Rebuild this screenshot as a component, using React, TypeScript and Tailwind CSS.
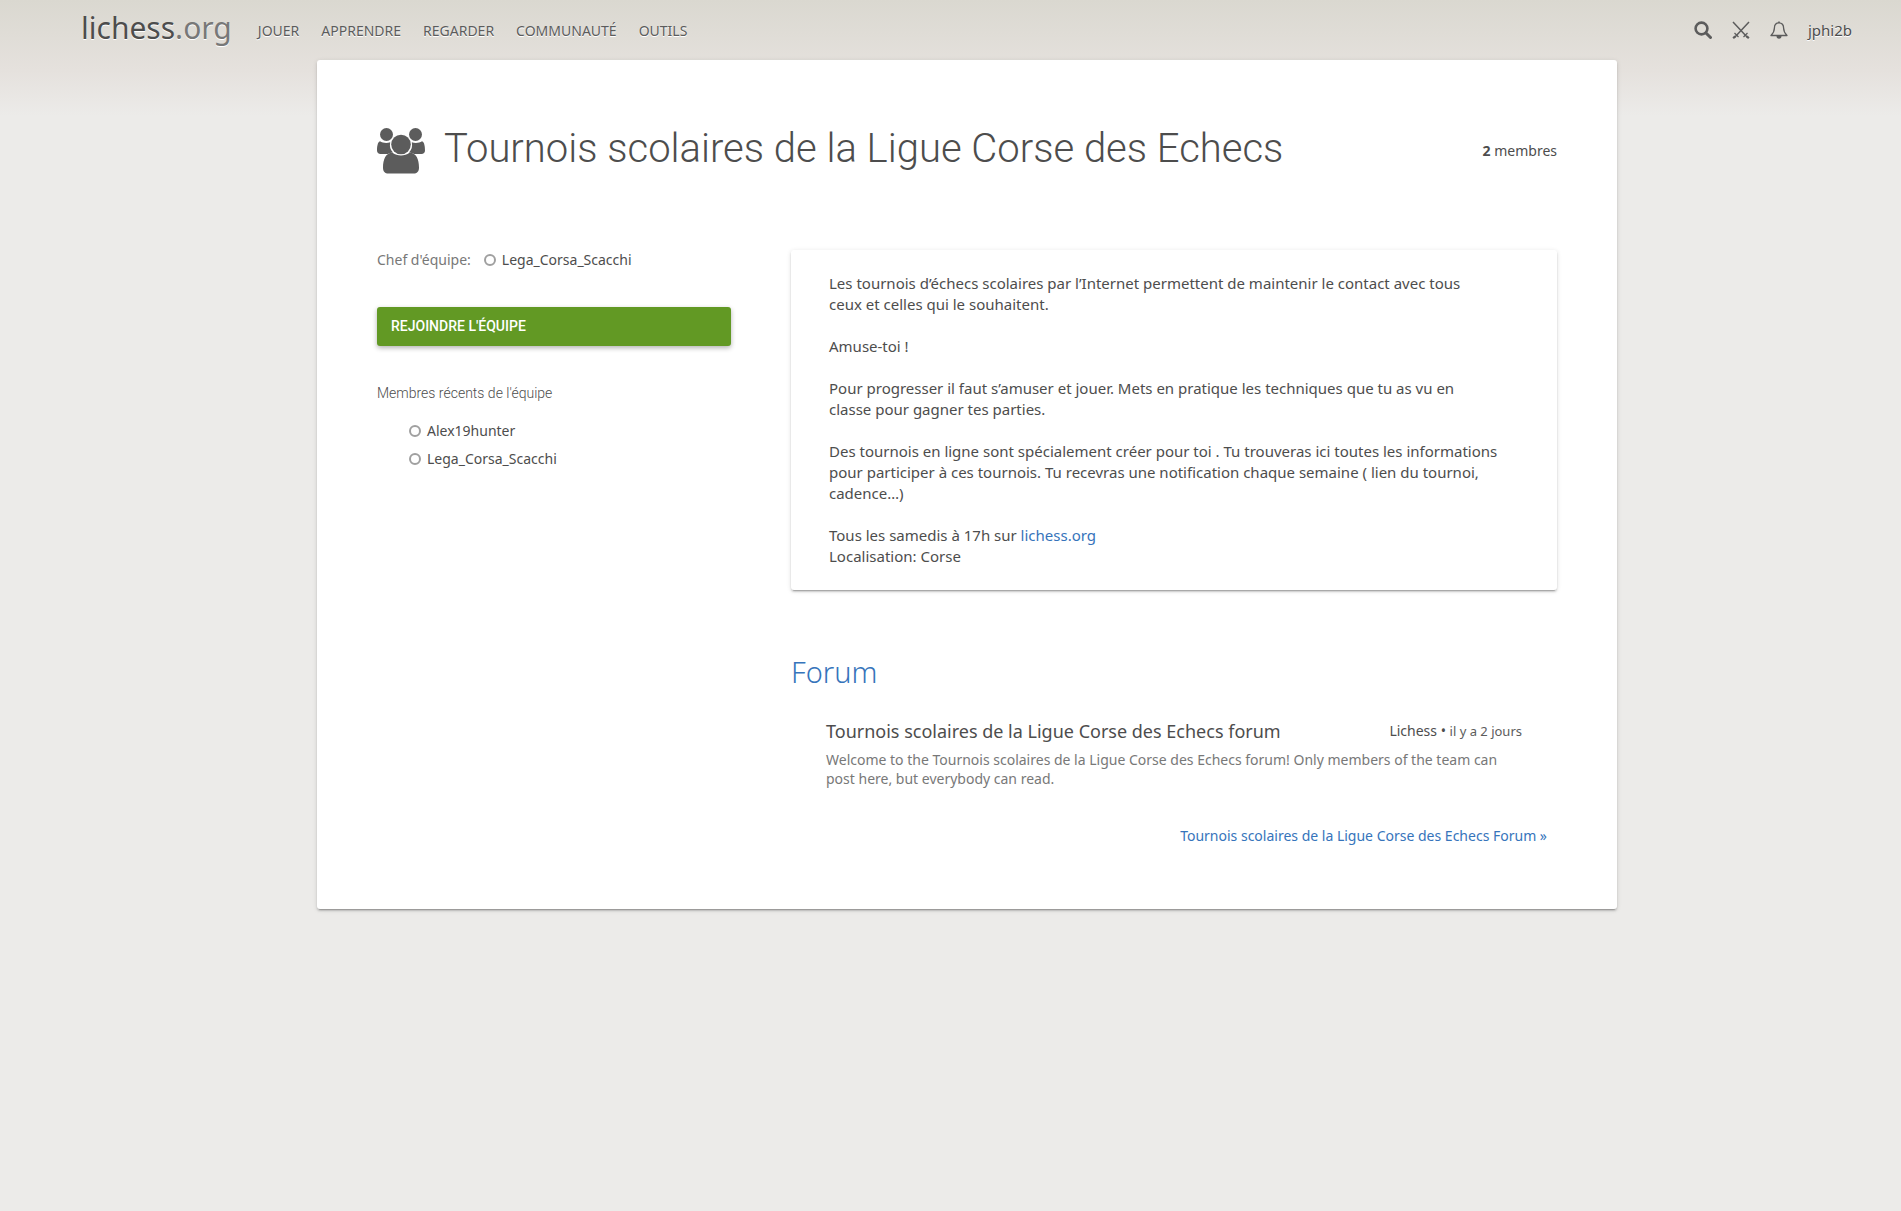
const NAV = ['JOUER', 'APPRENDRE', 'REGARDER', 'COMMUNAUTÉ', 'OUTILS'];

function GroupIcon() {
  return (
    <svg viewBox="0 0 48 46" className="h-[46px] w-12 shrink-0 fill-[#5c5c5c]" aria-hidden="true">
      <circle cx="9.5" cy="6.5" r="6.5" />
      <circle cx="38.5" cy="6.5" r="6.5" />
      <circle cx="24" cy="16.5" r="9.8" />
      <path d="M3 13.2C5.500 15 10 15.500 13.200 14.200 12.400 18.500 13.200 21.500 16 24.500 13.800 24.800 12.200 25.200 10.800 26H3.500C1.500 26 0 24.500 0 22.500 0 19 .5 14 3 13.200Z" />
      <path d="M45 13.200C42.500 15 38 15.500 34.800 14.200 35.600 18.500 34.800 21.500 32 24.500 34.200 24.800 35.800 25.200 37.200 26H44.500C46.500 26 48 24.500 48 22.500 48 19 47.500 14 45 13.200Z" />
      <path d="M15.500 24.800C20.500 28.500 27.500 28.500 32.500 24.800 39 24.500 42 31 42 39.500 42 43.500 40 45.500 36.500 45.500H11.500C8 45.500 6 43.500 6 39.500 6 31 9 24.500 15.500 24.800Z" />
    </svg>
  );
}

function SearchIcon() {
  return (
    <svg viewBox="0 0 18 18" className="size-[18px] fill-none stroke-[#5c5c5c]" aria-hidden="true">
      <circle cx="7.500" cy="7.500" r="5.900" strokeWidth="2.600" />
      <path d="M12 12l4.500 4.500" strokeWidth="3" strokeLinecap="round" />
    </svg>
  );
}

function SwordsIcon() {
  return (
    <svg viewBox="0 0 18 18" className="size-[18px] fill-none stroke-[#5c5c5c]" aria-hidden="true">
      <path d="M1 1l14.500 15.500M17 1L2.500 16.500" strokeWidth="1.500" />
      <path d="M2.500 12l4 4M15.500 12l-4 4" strokeWidth="1.200" />
      <path d="M1.200 17.200l2-2M16.800 17.200l-2-2" strokeWidth="2.200" />
    </svg>
  );
}

function BellIcon() {
  return (
    <svg viewBox="0 0 18 18" className="size-[18px] fill-none stroke-[#5c5c5c]" aria-hidden="true">
      <path d="M9 1.800C6 1.800 4.400 4 4.400 7 4.400 11 3 12.500 1 14.500H17C15 12.500 13.600 11 13.600 7 13.600 4 12 1.800 9 1.800Z" strokeWidth="1.300" strokeLinejoin="round" />
      <path d="M9 .5v1.500" strokeWidth="1.600" />
      <path d="M6.500 15h5a2.500 2.800 0 0 1-5 0Z" className="fill-[#5c5c5c] stroke-none" />
    </svg>
  );
}

function UserLink({ name }: { name: string }) {
  return (
    <a href="#" className="inline-flex items-center gap-1.5 text-[#4d4d4d]">
      <span className="size-3 rounded-full border-2 border-[#a0a0a0]" />
      {name}
    </a>
  );
}

export default function App() {
  return (
    <div className="min-h-screen bg-[#ecebe9] bg-[linear-gradient(to_bottom,#dad8d0,#e5e1dd_70px,#ecebe9_116px)] pb-10 font-['Noto_Sans',sans-serif] text-sm leading-[21px] text-[#4d4d4d]">
      <header className="flex h-[60px] items-center pr-[49px] pb-1 pl-[81px] [text-shadow:0_1px_0_#fff]">
        <a href="#" className="text-[30px] leading-[56px]">
          lichess<span className="text-[#787878]">.org</span>
        </a>
        <nav className="ml-[26px] flex gap-[22px] pt-1 text-[#5c5c5c]">
          {NAV.map((item) => (
            <a key={item} href="#">{item}</a>
          ))}
        </nav>
        <div className="ml-auto flex items-center gap-5 pt-1">
          <button type="button" aria-label="Rechercher"><SearchIcon /></button>
          <button type="button" aria-label="Défis"><SwordsIcon /></button>
          <button type="button" aria-label="Notifications"><BellIcon /></button>
          <a href="#" className="text-[15px]">jphi2b</a>
        </div>
      </header>

      <div className="pl-[33px]">
        <main className="mx-auto max-w-[1300px] rounded-[3px] bg-white px-[60px] pt-[60px] pb-[63px] shadow-[0_2px_2px_0_rgba(0,0,0,0.14),0_3px_1px_-2px_rgba(0,0,0,0.2),0_1px_5px_0_rgba(0,0,0,0.12)]">
          <div className="flex items-center justify-between">
            <div className="flex items-center gap-[19px]">
              <div className="pt-[2px]"><GroupIcon /></div>
              <h1 className="pb-[2px] font-[Roboto] text-[40px] leading-[58px] font-light">
                Tournois scolaires de la Ligue Corse des Echecs
              </h1>
            </div>
            <p><strong>2</strong> membres</p>
          </div>

          <div className="mt-[70px] grid grid-cols-[354fr_766fr] gap-[60px]">
            <section>
              <p className="flex items-center gap-[13px] leading-[19px] text-[#787878]">
                Chef d'équipe: <UserLink name="Lega_Corsa_Scacchi" />
              </p>
              <button
                type="button"
                className="mt-[38px] block w-full rounded-[3px] bg-[#629924] px-3.5 py-[9px] text-left font-[Roboto] font-medium text-white uppercase shadow-[0_2px_5px_0_rgba(0,0,0,0.3)]"
              >
                Rejoindre l'équipe
              </button>
              <h2 className="mt-[37px] font-[Roboto] font-light">Membres récents de l'équipe</h2>
              <ul className="mt-4 flex flex-col gap-[7px] pl-8">
                <li className="flex"><UserLink name="Alex19hunter" /></li>
                <li className="flex"><UserLink name="Lega_Corsa_Scacchi" /></li>
              </ul>
            </section>

            <div>
              <section className="flex flex-col gap-[21px] rounded-[3px] px-[38px] py-[23px] text-[15px] shadow-[0_2px_2px_0_rgba(0,0,0,0.14),0_3px_1px_-2px_rgba(0,0,0,0.2),0_1px_5px_0_rgba(0,0,0,0.12)]">
                <p>
                  Les tournois d’échecs scolaires par l’Internet permettent de maintenir le contact avec tous
                  <br />
                  ceux et celles qui le souhaitent.
                </p>
                <p>Amuse-toi !</p>
                <p>
                  Pour progresser il faut s’amuser et jouer. Mets en pratique les techniques que tu as vu en
                  <br />
                  classe pour gagner tes parties.
                </p>
                <p>
                  Des tournois en ligne sont spécialement créer pour toi . Tu trouveras ici toutes les informations
                  pour participer à ces tournois. Tu recevras une notification chaque semaine ( lien du tournoi,
                  cadence…)
                </p>
                <p>
                  Tous les samedis à 17h sur <a href="#" className="text-[#3674bb]">lichess.org</a>
                  <br />
                  Localisation: Corse
                </p>
              </section>

              <section className="mt-[60px]">
                <h2 className="text-[29px] leading-[43px] font-light text-[#3674bb]">
                  <a href="#">Forum</a>
                </h2>
                <article className="mt-[26px] px-[35px]">
                  <div className="flex items-center justify-between">
                    <a href="#" className="text-lg leading-6">Tournois scolaires de la Ligue Corse des Echecs forum</a>
                    <p>
                      Lichess • <time className="text-[13px] text-[#5c5c5c]">il y a 2 jours</time>
                    </p>
                  </div>
                  <p className="mt-[7px] leading-[19px] text-[#787878]">
                    Welcome to the Tournois scolaires de la Ligue Corse des Echecs forum! Only members of the team can
                    post here, but everybody can read.
                  </p>
                </article>
                <a href="#" className="mt-[37px] mr-2.5 block text-right text-[#3674bb]">
                  Tournois scolaires de la Ligue Corse des Echecs Forum »
                </a>
              </section>
            </div>
          </div>
        </main>
      </div>
    </div>
  );
}
